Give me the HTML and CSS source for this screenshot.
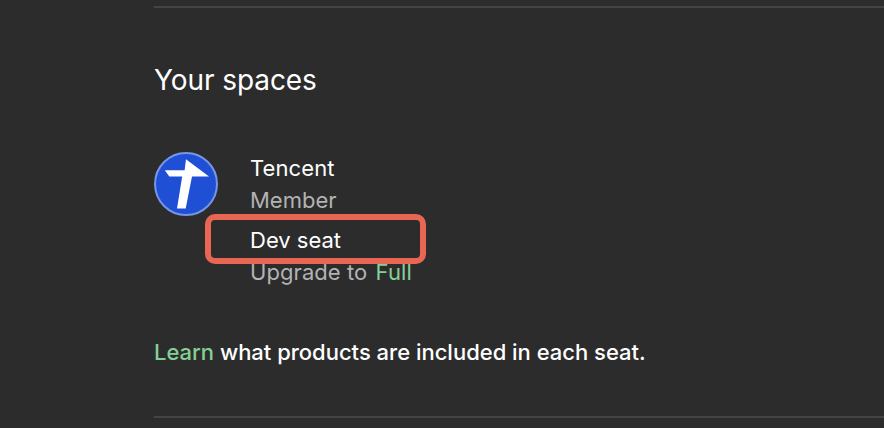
FILE: index.html
```html
<!DOCTYPE html>
<html lang="en">
<head>
<meta charset="utf-8">
<title>Your spaces</title>
<link rel="stylesheet" href="styles.css">
</head>
<body>
<section class="spaces">
  <h2 class="heading">Your spaces</h2>
  <div class="space">
    <svg class="avatar" viewBox="0 0 64 64" aria-hidden="true">
      <circle cx="32" cy="32" r="31" fill="#1f4fd4" stroke="#7597e6" stroke-width="2"/>
      <path d="M32 7.2L55 24.6H38L31.7 56.5H23L28.2 24.6H15.3L10.8 18.2H30.6Z" fill="#fff"/>
    </svg>
    <div class="details">
      <div class="name">Tencent</div>
      <div class="muted">Member</div>
      <div class="seat">Dev seat<span class="marker"></span></div>
      <div class="muted upgrade">Upgrade to <a class="link">Full</a></div>
    </div>
  </div>
  <p class="note"><a class="link">Learn</a> what products are included in each seat.</p>
</section>
</body>
</html>
```

FILE: styles.css
```css
body {
  margin: 0;
  height: 428px;
  overflow: hidden;
  background: #2c2c2c;
  color: #fff;
  font: 22px/32px Inter, sans-serif;
}

.spaces {
  margin: 6px 0 0 154px;
  height: 408px;
  border-top: 2px solid #444;
  border-bottom: 2px solid #444;
}

.heading {
  margin: 0;
  padding-top: 52px;
  font-size: 28px;
  font-weight: 400;
  line-height: 40px;
  letter-spacing: -0.08px;
}

.space {
  display: flex;
  gap: 32px;
  margin-top: 52px;
}

.avatar {
  width: 64px;
  height: 64px;
}

.muted {
  color: #b3b3b3;
}

.name {
  letter-spacing: 0.1px;
}

.seat {
  position: relative;
  margin-top: 8px;
}

.marker {
  position: absolute;
  left: -45px;
  top: -10px;
  box-sizing: border-box;
  width: 221px;
  height: 50px;
  border: 6px solid #e96655;
  border-radius: 10px;
}

.link {
  color: #85cf95;
}

.upgrade {
  letter-spacing: 0.07px;
}

.upgrade .link {
  margin-left: 2px;
}

.note {
  margin: 48px 0 0;
  font-weight: 500;
  letter-spacing: -0.01px;
}
```
